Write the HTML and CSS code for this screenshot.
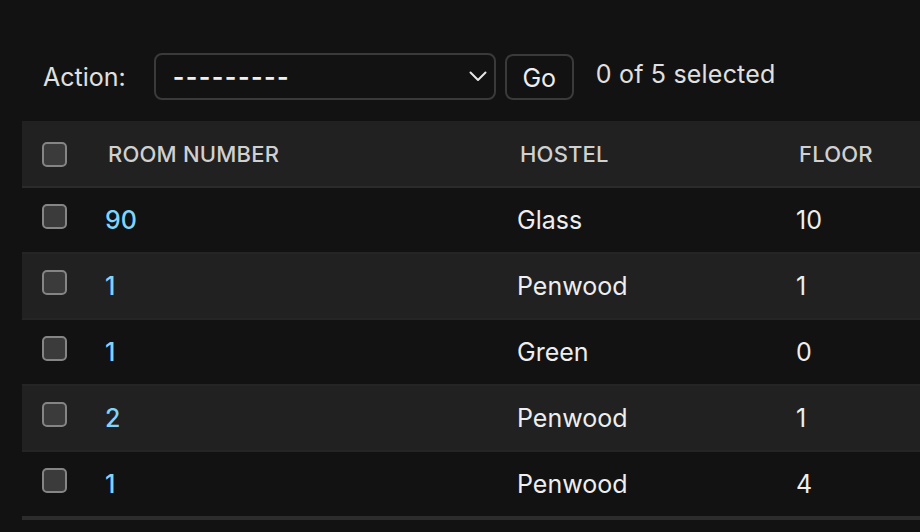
FILE: index.html
```html
<!DOCTYPE html>
<html>
<head>
<meta charset="utf-8">
<link rel="stylesheet" href="styles.css">
</head>
<body>
<div class="page">
  <div class="actions">
    <label class="action-label">Action:</label>
    <div class="select">
      <span class="select-value">---------</span>
      <svg class="chevron" width="18" height="11" viewBox="0 0 18 11"><path d="M1.5 1.5 L9 9 L16.5 1.5" fill="none" stroke="#e6e6e6" stroke-width="2" stroke-linecap="round" stroke-linejoin="round"/></svg>
    </div>
    <button class="go">Go</button>
    <span class="counter">0 of 5 selected</span>
  </div>
  <table class="results">
    <colgroup>
      <col class="c-check"><col class="c-room"><col class="c-hostel"><col class="c-floor">
    </colgroup>
    <thead>
      <tr>
        <th class="check"><span class="cb"></span></th>
        <th>Room number</th>
        <th>Hostel</th>
        <th>Floor</th>
      </tr>
    </thead>
    <tbody>
      <tr class="row1"><td class="check"><span class="cb"></span></td><th><a href="#">90</a></th><td>Glass</td><td>10</td></tr>
      <tr class="row2"><td class="check"><span class="cb"></span></td><th><a href="#">1</a></th><td>Penwood</td><td>1</td></tr>
      <tr class="row1"><td class="check"><span class="cb"></span></td><th><a href="#">1</a></th><td>Green</td><td>0</td></tr>
      <tr class="row2"><td class="check"><span class="cb"></span></td><th><a href="#">2</a></th><td>Penwood</td><td>1</td></tr>
      <tr class="row1"><td class="check"><span class="cb"></span></td><th><a href="#">1</a></th><td>Penwood</td><td>4</td></tr>
    </tbody>
  </table>
</div>
</body>
</html>
```

FILE: styles.css
```css
html, body {
  margin: 0;
  padding: 0;
  background: #121212;
  overflow: hidden;
}
body {
  font-family: Inter, "Noto Sans", sans-serif;
  color: #eeeeee;
  width: 920px;
  height: 532px;
}
.page {
  padding-top: 53px;
}
.actions {
  display: flex;
  align-items: center;
  height: 47px;
  padding-left: 43px;
}
.action-label {
  font-size: 25px;
  color: #e0e0e0;
  margin-right: 28px;
  line-height: 1;
  padding-top: 2px;
}
.select {
  box-sizing: border-box;
  width: 342px;
  height: 47px;
  border: 2px solid #3a3a3a;
  border-radius: 8px;
  display: flex;
  align-items: center;
  justify-content: space-between;
  padding: 0 7px 0 17px;
}
.select-value {
  font-size: 25px;
  font-weight: 600;
  letter-spacing: 1.4px;
  color: #f0f0f0;
}
.chevron {
  display: block;
}
.go {
  box-sizing: border-box;
  margin-left: 9px;
  width: 69px;
  height: 46px;
  margin-top: 1px;
  border: 2px solid #3a3a3a;
  border-radius: 8px;
  background: #121212;
  color: #eeeeee;
  font-family: Inter, "Noto Sans", sans-serif;
  font-size: 25px;
  padding: 0;
  padding-top: 2px;
}
.counter {
  margin-left: 22px;
  font-size: 25px;
  letter-spacing: 0.2px;
  color: #e0e0e0;
  margin-top: -6px;
}
.results {
  margin-top: 21px;
  margin-left: 22px;
  border-collapse: collapse;
  table-layout: fixed;
  width: 1100px;
}
.c-check { width: 67px; }
.c-room { width: 412px; }
.c-hostel { width: 279px; }
.c-floor { width: 342px; }
thead th {
  background: #212121;
  height: 63px;
  padding: 0 0 0 19px;
  text-align: left;
  font-size: 22px;
  font-weight: 500;
  text-transform: uppercase;
  color: #d0d0d0;
  letter-spacing: 0.2px;
  border-bottom: 2px solid #2b2b2b;
  vertical-align: middle;
}
thead th.check {
  padding-left: 20px;
  padding-top: 2px;
}
tbody td, tbody th {
  height: 62px;
  padding: 1px 0 1px 16px;
  text-align: left;
  font-size: 25px;
  font-weight: 400;
  color: #eeeeee;
  border-bottom: 2px solid #252525;
  vertical-align: middle;
}
tbody tr:last-child td, tbody tr:last-child th {
  border-bottom: 4px solid #2c2c2c;
}
tbody th {
  font-weight: 500;
}
tbody td.check {
  padding-left: 20px;
  padding-top: 0;
  vertical-align: top;
}
tbody td.check .cb {
  margin-top: 16px;
}
.row1 { background: #121212; }
.row2 { background: #212121; }
a {
  color: #81d4fa;
  text-decoration: none;
}
.cb {
  display: block;
  box-sizing: border-box;
  width: 25px;
  height: 25px;
  border: 2px solid #858585;
  border-radius: 5px;
  background: #3b3b3b;
}
```
